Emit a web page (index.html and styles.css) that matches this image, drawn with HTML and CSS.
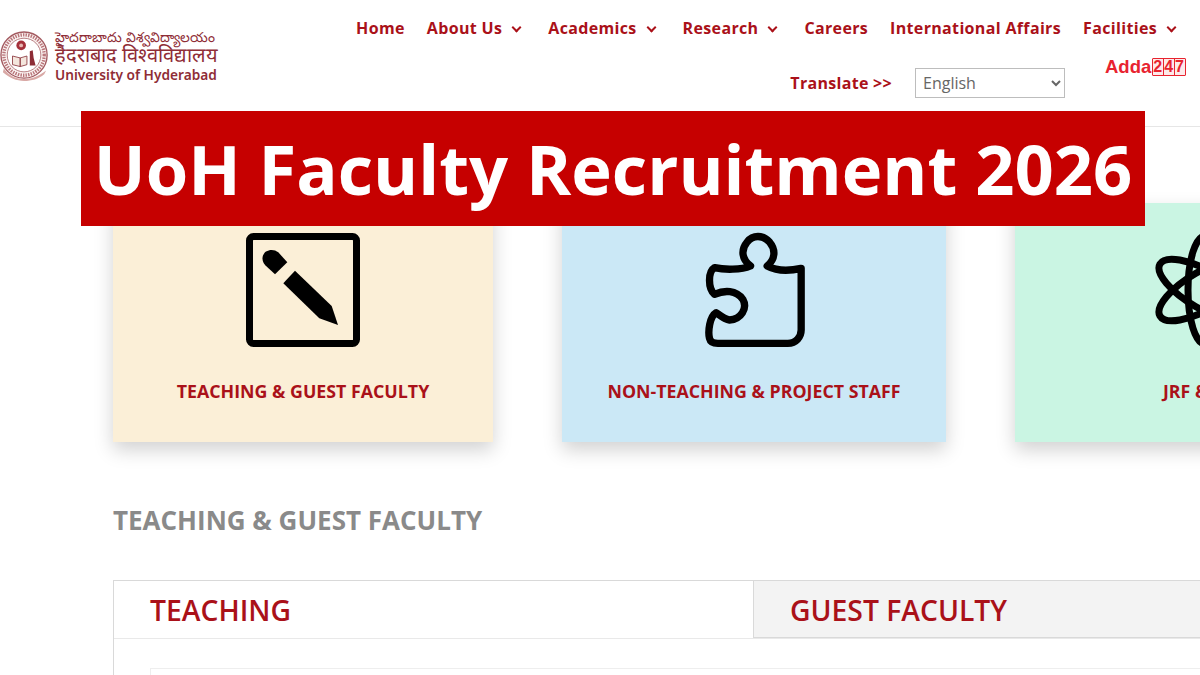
FILE: index.html
```html
<!DOCTYPE html>
<html lang="en">
<head>
  <meta charset="UTF-8">
  <meta name="viewport" content="width=device-width, initial-scale=1.0">
  <title>UoH Faculty Recruitment 2026</title>
  <link rel="stylesheet" href="styles.css">
</head>
<body>

  <!-- Header -->
  <header class="site-header">
    <a href="#" class="logo">
      <svg class="seal" viewBox="0 0 52 54" aria-hidden="true">
        <circle cx="25" cy="26" r="24" fill="#fbf3f1" stroke="#a35a60" stroke-width="1.4"/>
        <circle cx="25" cy="26" r="21" fill="none" stroke="#b9777c" stroke-width="3.5" stroke-dasharray="1.5 1.2"/>
        <circle cx="25" cy="26" r="17.5" fill="#fff" stroke="#a35a60" stroke-width="0.8"/>
        <circle cx="22" cy="16" r="5" fill="#a5303a"/>
        <circle cx="22" cy="16" r="2" fill="#e6b7b2"/>
        <path d="M13 27l8 2v9l-8-2zM21 29l7-2v9l-7 2z" fill="#f4e6dd" stroke="#8d3b42" stroke-width="0.9"/>
        <path d="M31 22l3-1 1 8 2 8h-6z" fill="#8d2c35"/>
        <path d="M4 40c6 8 13 11 21 11s15-3 23-9l-2 4c-6 5-13 7-21 7S10 50 3 44z" fill="#d9a9a6"/>
      </svg>
      <span class="logo-text">
        <span class="logo-te">హైదరాబాదు విశ్వవిద్యాలయం</span>
        <span class="logo-hi">हैदराबाद विश्वविद्यालय</span>
        <span class="logo-en">University of Hyderabad</span>
      </span>
    </a>

    <div class="header-right">
      <nav class="main-nav">
        <a href="#">Home</a>
        <a href="#" class="has-sub">About Us</a>
        <a href="#" class="has-sub">Academics</a>
        <a href="#" class="has-sub">Research</a>
        <a href="#">Careers</a>
        <a href="#">International Affairs</a>
        <a href="#" class="has-sub">Facilities</a>
      </nav>
      <div class="translate-row">
        <span class="translate-label">Translate &gt;&gt;</span>
        <select class="lang-select">
          <option>English</option>
        </select>
      </div>
    </div>
  </header>

  <!-- Watermark and title banner, over the page -->
  <div class="adda-mark">Adda<span class="adda-num"><span>2</span><span>4</span><span>7</span></span></div>
  <h1 class="banner">UoH Faculty Recruitment 2026</h1>

  <!-- Contenido -->
  <main class="content">
    <div class="cards">
      <div class="card card-cream">
        <svg class="card-icon" viewBox="0 0 114 114" aria-hidden="true">
          <rect x="3.5" y="3.5" width="107" height="107" rx="4" fill="none" stroke="#000" stroke-width="7"/>
          <path d="M41.3 29.3L29 41.3l-9.5-8.8C14.5 27 16.5 21 20 18.5c4-2.5 9-2 12.3.8z"/>
          <path d="M49 37.7L85.7 73 92 92l-18.7-6.700L37.300 50.300z"/>
        </svg>
        <span class="card-label">TEACHING &amp; GUEST FACULTY</span>
      </div>
      <div class="card card-blue">
        <svg class="card-icon card-icon-puzzle" viewBox="450 90 320 360" aria-hidden="true">
          <path d="M750 205C720 212 680 215 648 198C672 178 675 150 655 126C635 104 605 104 588 126C568 150 572 178 598 198C570 210 520 210 490 203C470 215 470 265 490 283C520 270 555 270 575 298C590 325 570 358 535 360C520 358 505 345 495 338C475 350 470 395 475 415C478 428 490 430 500 430L710 430C735 430 750 410 750 390Z" fill="none" stroke="#000" stroke-width="22" stroke-linejoin="round"/>
        </svg>
        <span class="card-label">NON-TEACHING &amp; PROJECT STAFF</span>
      </div>
      <div class="card card-green">
        <svg class="card-icon" viewBox="-57 -57 114 114" aria-hidden="true">
          <g fill="none" stroke="#000" stroke-width="7">
            <ellipse rx="54" ry="17" transform="rotate(90)"/>
            <ellipse rx="52" ry="19" transform="rotate(30)"/>
            <ellipse rx="52" ry="19" transform="rotate(-30)"/>
          </g>
        </svg>
        <span class="card-label">JRF &amp; PDF</span>
      </div>
    </div>

    <h2 class="section-title">TEACHING &amp; GUEST FACULTY</h2>

    <div class="tabs-box">
      <div class="tabs">
        <div class="tab tab-active">TEACHING</div>
        <div class="tab">GUEST FACULTY</div>
      </div>
      <div class="tab-body">
        <div class="tab-panel"></div>
      </div>
    </div>
  </main>

</body>
</html>
```

FILE: styles.css
```css
/* General */
html, body {
  height: 100%;
}

body {
  margin: 0;
  width: 1200px;
  height: 675px;
  overflow: hidden;
  position: relative;
  background: #fff;
  font-family: "Open Sans", "Liberation Sans", sans-serif;
}

/* Header */
.site-header {
  height: 127px;
  box-sizing: border-box;
  border-bottom: 1px solid #e6e6e6;
  display: flex;
  justify-content: space-between;
}

.logo {
  display: flex;
  align-items: flex-start;
  gap: 5px;
  padding-top: 30px;
  text-decoration: none;
}

.seal {
  width: 50px;
  height: 52px;
}

.logo-text {
  display: flex;
  flex-direction: column;
  margin-top: -2px;
  color: #8f2d36;
  white-space: nowrap;
}

.logo-te {
  font-size: 13.8px;
  line-height: 17px;
}

.logo-hi {
  font-size: 20px;
  line-height: 20px;
}

.logo-en {
  font-family: "Noto Sans", sans-serif;
  font-size: 13.7px;
  font-weight: 600;
  line-height: 20px;
}

.header-right {
  display: flex;
  flex-direction: column;
  align-items: flex-end;
  padding: 17px 19px 0 0;
}

.main-nav {
  display: flex;
  gap: 22px;
}

.main-nav a {
  color: #aa1119;
  font-size: 16px;
  font-weight: 700;
  letter-spacing: 0.34px;
  line-height: 22px;
  text-decoration: none;
  white-space: nowrap;
}

.main-nav .has-sub {
  padding-right: 24px;
  position: relative;
}

/* chevron drawn with borders */
.main-nav .has-sub::after {
  content: "";
  position: absolute;
  right: 6px;
  top: 7px;
  width: 5px;
  height: 5px;
  border-right: 2px solid #aa1119;
  border-bottom: 2px solid #aa1119;
  transform: rotate(45deg);
}

.translate-row {
  display: flex;
  align-items: center;
  gap: 23px;
  margin: 29px 116px 0 0;
}

.translate-label {
  color: #aa1119;
  font-size: 16px;
  font-weight: 700;
  letter-spacing: 0.3px;
}

.lang-select {
  width: 150px;
  height: 30px;
  padding: 0 3px;
  background: #fff;
  border: 1px solid #bdbdbd;
  color: #666;
  font-family: "Open Sans", sans-serif;
  font-size: 16px;
}

/* Overlays */
.adda-mark {
  position: absolute;
  left: 1105px;
  top: 56px;
  display: flex;
  align-items: center;
  color: #e8232f;
  font-family: "Liberation Sans", sans-serif;
  font-size: 18.500px;
  font-weight: 700;
  line-height: 21px;
}

.adda-num {
  display: flex;
  margin-left: 1px;
  border: 1px solid #e8232f;
  border-radius: 1px;
  background: #fdeaea;
  font-size: 16px;
  line-height: 16px;
}

.adda-num span {
  padding: 0 1px 0 0;
}

.adda-num span + span {
  border-left: 1px solid #e8232f;
}

.banner {
  position: absolute;
  left: 81px;
  top: 111px;
  width: 1064px;
  height: 115px;
  margin: 0;
  background: #c60000;
  color: #fff;
  font-size: 68.700px;
  font-weight: 700;
  line-height: 115px;
  text-align: center;
  white-space: nowrap;
}

/* Contenido */
.content {
  padding: 76px 0 0 113px;
}

.cards {
  display: flex;
  gap: 69px;
}

.card {
  flex: none;
  width: 380px;
  height: 239px;
  box-sizing: border-box;
  padding-top: 30px;
  display: flex;
  flex-direction: column;
  align-items: center;
  box-shadow: 0 8px 18px rgba(0, 0, 0, 0.18);
}

.card-cream {
  background: #fbefd7;
}

.card-blue {
  width: 384px;
  background: #cbe8f6;
}

.card-green {
  background: #caf5e3;
}

.card-icon {
  height: 114px;
  width: 114px;
  flex: none;
}

.card-icon-puzzle {
  height: 120px;
  width: 107px;
  margin: -3px 0;
}

.card-label {
  margin-top: 33px;
  color: #aa1119;
  font-size: 17.800px;
  font-weight: 700;
  line-height: 23px;
  white-space: nowrap;
}

.section-title {
  margin: 60px 0 0;
  color: #8a8a8a;
  font-size: 26px;
  font-weight: 700;
  line-height: 36px;
}

/* Tabs */
.tabs-box {
  width: 1279px;
  margin-top: 42px;
  border: 1px solid #d9d9d9;
  border-bottom: 0;
}

.tabs {
  display: flex;
  height: 57px;
  border-bottom: 1px solid #e9e9e9;
}

.tab {
  flex: 1;
  padding-left: 36px;
  color: #aa1119;
  font-size: 28.300px;
  font-weight: 600;
  line-height: 58px;
}

.tab + .tab {
  background: #f3f3f3;
  border-left: 1px solid #d9d9d9;
  border-bottom: 1px solid #d9d9d9;
}

.tab-body {
  padding: 29px 0 0 36px;
}

.tab-panel {
  height: 40px;
  border: 1px solid #eee;
}
```
